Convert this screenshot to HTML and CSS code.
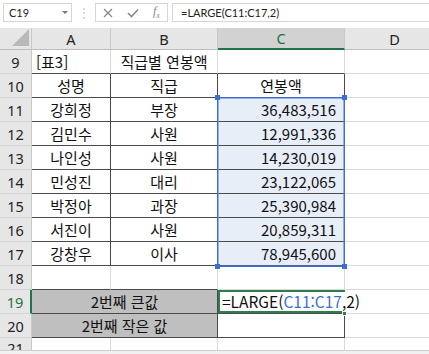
FILE: index.html
```html
<!DOCTYPE html>
<html lang="ko">
<head>
<meta charset="utf-8">
<link rel="stylesheet" href="styles.css">
</head>
<body>
<div class="app">
  <div class="fbar">
    <div class="namebox"><span>C19</span><span class="dd"></span></div>
    <div class="sep">⋮</div>
    <div class="btns">
      <svg width="10" height="10" viewBox="0 0 10 10"><path d="M1 1L9 9M9 1L1 9" stroke="#8a8a8a" stroke-width="1.3"/></svg>
      <svg width="12" height="10" viewBox="0 0 12 10"><path d="M1 5L4.5 8.5L11 1.5" stroke="#8a8a8a" stroke-width="1.6" fill="none"/></svg>
      <span class="fx">f<sub>x</sub></span>
    </div>
    <div class="finput">=LARGE(C11:C17,2)</div>
  </div>
  <div class="sheet">
    <div class="hd corner"><svg width="19" height="18" viewBox="0 0 19 18"><path d="M18 0L18 17L1 17Z" fill="#b9b9b9"/></svg></div>
    <div class="hd col">A</div>
    <div class="hd col">B</div>
    <div class="hd col sel">C</div>
    <div class="hd col">D</div>

    <div class="rh">9</div>
    <div class="c left tb-b">[표3]</div>
    <div class="c ctr tb-b nowrap">직급별 연봉액</div>
    <div class="c tb-b"></div>
    <div class="c"></div>

    <div class="rh">10</div>
    <div class="c ctr tb">성명</div>
    <div class="c ctr tb">직급</div>
    <div class="c ctr tb">연봉액</div>
    <div class="c"></div>

    <div class="rh">11</div>
    <div class="c ctr tb">강희정</div>
    <div class="c ctr tb">부장</div>
    <div class="c num tb hl">36,483,516</div>
    <div class="c"></div>

    <div class="rh">12</div>
    <div class="c ctr tb">김민수</div>
    <div class="c ctr tb">사원</div>
    <div class="c num tb hl">12,991,336</div>
    <div class="c"></div>

    <div class="rh">13</div>
    <div class="c ctr tb">나인성</div>
    <div class="c ctr tb">사원</div>
    <div class="c num tb hl">14,230,019</div>
    <div class="c"></div>

    <div class="rh">14</div>
    <div class="c ctr tb">민성진</div>
    <div class="c ctr tb">대리</div>
    <div class="c num tb hl">23,122,065</div>
    <div class="c"></div>

    <div class="rh">15</div>
    <div class="c ctr tb">박정아</div>
    <div class="c ctr tb">과장</div>
    <div class="c num tb hl">25,390,984</div>
    <div class="c"></div>

    <div class="rh">16</div>
    <div class="c ctr tb">서진이</div>
    <div class="c ctr tb">사원</div>
    <div class="c num tb hl">20,859,311</div>
    <div class="c"></div>

    <div class="rh">17</div>
    <div class="c ctr tb">강창우</div>
    <div class="c ctr tb">이사</div>
    <div class="c num tb hl">78,945,600</div>
    <div class="c"></div>

    <div class="rh">18</div>
    <div class="c tb-b"></div>
    <div class="c tb-b"></div>
    <div class="c"></div>
    <div class="c"></div>

    <div class="rh rsel">19</div>
    <div class="c ctr tb gray span2">2번째 큰값</div>
    <div class="c edit">=LARGE(<span class="ref">C11:C17</span>,2)<span class="ghandle"></span></div>
    <div class="c"></div>

    <div class="rh">20</div>
    <div class="c ctr tb gray span2">2번째 작은 값</div>
    <div class="c tb"></div>
    <div class="c"></div>

    <div class="rh">21</div>
    <div class="c"></div>
    <div class="c"></div>
    <div class="c"></div>
    <div class="c"></div>

    <div class="range">
      <span class="h tl"></span><span class="h tr"></span><span class="h bl"></span><span class="h br"></span>
    </div>
  </div>
  <div class="bottom"><span></span><span></span><span></span></div>
</div>
</body>
</html>
```

FILE: styles.css
```css
* { box-sizing: border-box; }
html, body { margin: 0; padding: 0; background: #fff; }
body { width: 429px; height: 354px; overflow: hidden; }
.app { width: 429px; height: 354px; position: relative; overflow: hidden; }

.fbar {
  height: 28px;
  display: flex;
  align-items: flex-start;
  padding-top: 3px;
  font-family: Lato, "Noto Sans", sans-serif;
  color: #222;
}
.namebox {
  margin-left: 3px;
  width: 69px;
  height: 19px;
  border: 1px solid #d6d6d6;
  display: flex;
  align-items: center;
  justify-content: space-between;
  padding: 0 3px 0 5px;
  font-size: 11px;
}
.dd {
  width: 0; height: 0;
  border-left: 3px solid transparent;
  border-right: 3px solid transparent;
  border-top: 3px solid #777;
}
.sep {
  width: 23px;
  text-align: center;
  color: #c8c8c8;
  font-size: 12px;
  line-height: 19px;
}
.btns {
  width: 73px;
  height: 19px;
  border: 1px solid #d6d6d6;
  display: flex;
  align-items: center;
  gap: 14px;
  padding: 0 0 0 7px;
}
.fx {
  font-family: "Liberation Serif", serif;
  font-style: italic;
  font-size: 12px;
  color: #8a8a8a;
  line-height: 1;
}
.fx sub { font-size: 8px; }
.finput {
  margin-left: 4px;
  flex: 1;
  height: 19px;
  border: 1px solid #d6d6d6;
  border-right: none;
  font-size: 11px;
  line-height: 17px;
  padding-left: 8px;
}

.sheet {
  position: relative;
  display: grid;
  width: 445px;
  grid-template-columns: 32px 79px 107px 127px 100px;
  grid-template-rows: 22px repeat(12, 24px) 20px;
  font-family: "Noto Sans CJK KR", "Noto Sans", sans-serif;
  font-size: 15px;
  color: #111;
}
.hd {
  background: #e6e6e6;
  border-right: 1px solid #c9c9c9;
  border-bottom: 1px solid #bdbdbd;
  font-family: "Noto Sans", "Open Sans", sans-serif;
  font-size: 14.5px;
  color: #222;
  display: flex;
  align-items: center;
  justify-content: center;
}
.hd.corner { justify-content: flex-end; align-items: flex-end; padding: 0 1px 2px 0; }
.hd.sel {
  background: #d2d2d2;
  color: #217346;
  border-bottom: 2px solid #217346;
}
.rh {
  background: #e6e6e6;
  border-right: 1px solid #c9c9c9;
  border-bottom: 1px solid #d4d4d4;
  font-family: "Noto Sans", "Open Sans", sans-serif;
  font-size: 14.5px;
  color: #222;
  display: flex;
  align-items: center;
  justify-content: center;
}
.rh.rsel {
  color: #217346;
  border-right: 2px solid #217346;
}
.c {
  border-right: 1px solid #dadada;
  border-bottom: 1px solid #dadada;
  display: flex;
  align-items: center;
  padding: 0 4px;
  white-space: nowrap;
  line-height: 1;
}
.c.left { justify-content: flex-start; }
.c.ctr { justify-content: center; }
.c.num { justify-content: flex-end; padding-right: 8px; }
.c.nowrap { padding: 0; }
.c.tb { border-right-color: #4a4a4a; border-bottom-color: #4a4a4a; }
.c.tb-b { border-bottom-color: #4a4a4a; }
.c.hl { background: #e8eef8; }
.c.gray { background: #bfbfbf; }
.span2 { grid-column: span 2; }

.c.edit {
  position: relative;
  z-index: 2;
  overflow: visible;
  padding-left: 4px;
  border-right-color: transparent;
  border-bottom-color: #4a4a4a;
  box-shadow: inset 2px 2px 0 #2e7d4f, inset 0 -2px 0 #2e7d4f;
  margin-right: -1px;
  font-size: 15.5px;
}
.ref { color: #3a6fd6; }
.ghandle {
  position: absolute;
  right: -2px;
  bottom: -3px;
  width: 5px;
  height: 5px;
  background: #2e7d4f;
  border: 1px solid #fff;
}

.range {
  position: absolute;
  grid-column: 4 / 5;
  grid-row: 4 / 11;
  top: -1px;
  bottom: -1px;
  left: -1px;
  right: 0;
  border: 1px solid #3c6fd1;
  box-shadow: inset 0 0 0 1px rgba(80, 125, 215, 0.55);
  z-index: 1;
}
.h {
  position: absolute;
  width: 5px;
  height: 5px;
  background: #3d6fd0;
}
.h.tl { left: -3px; top: -3px; }
.h.tr { right: -3px; top: -3px; }
.h.bl { left: -3px; bottom: -3px; }
.h.br { right: -3px; bottom: -3px; }

.bottom {
  position: absolute;
  left: 0; right: 0; bottom: 0;
  height: 4px;
  background: #f0f0f0;
  border-top: 1px solid #d0d0d0;
  display: flex;
  justify-content: space-around;
}
```
